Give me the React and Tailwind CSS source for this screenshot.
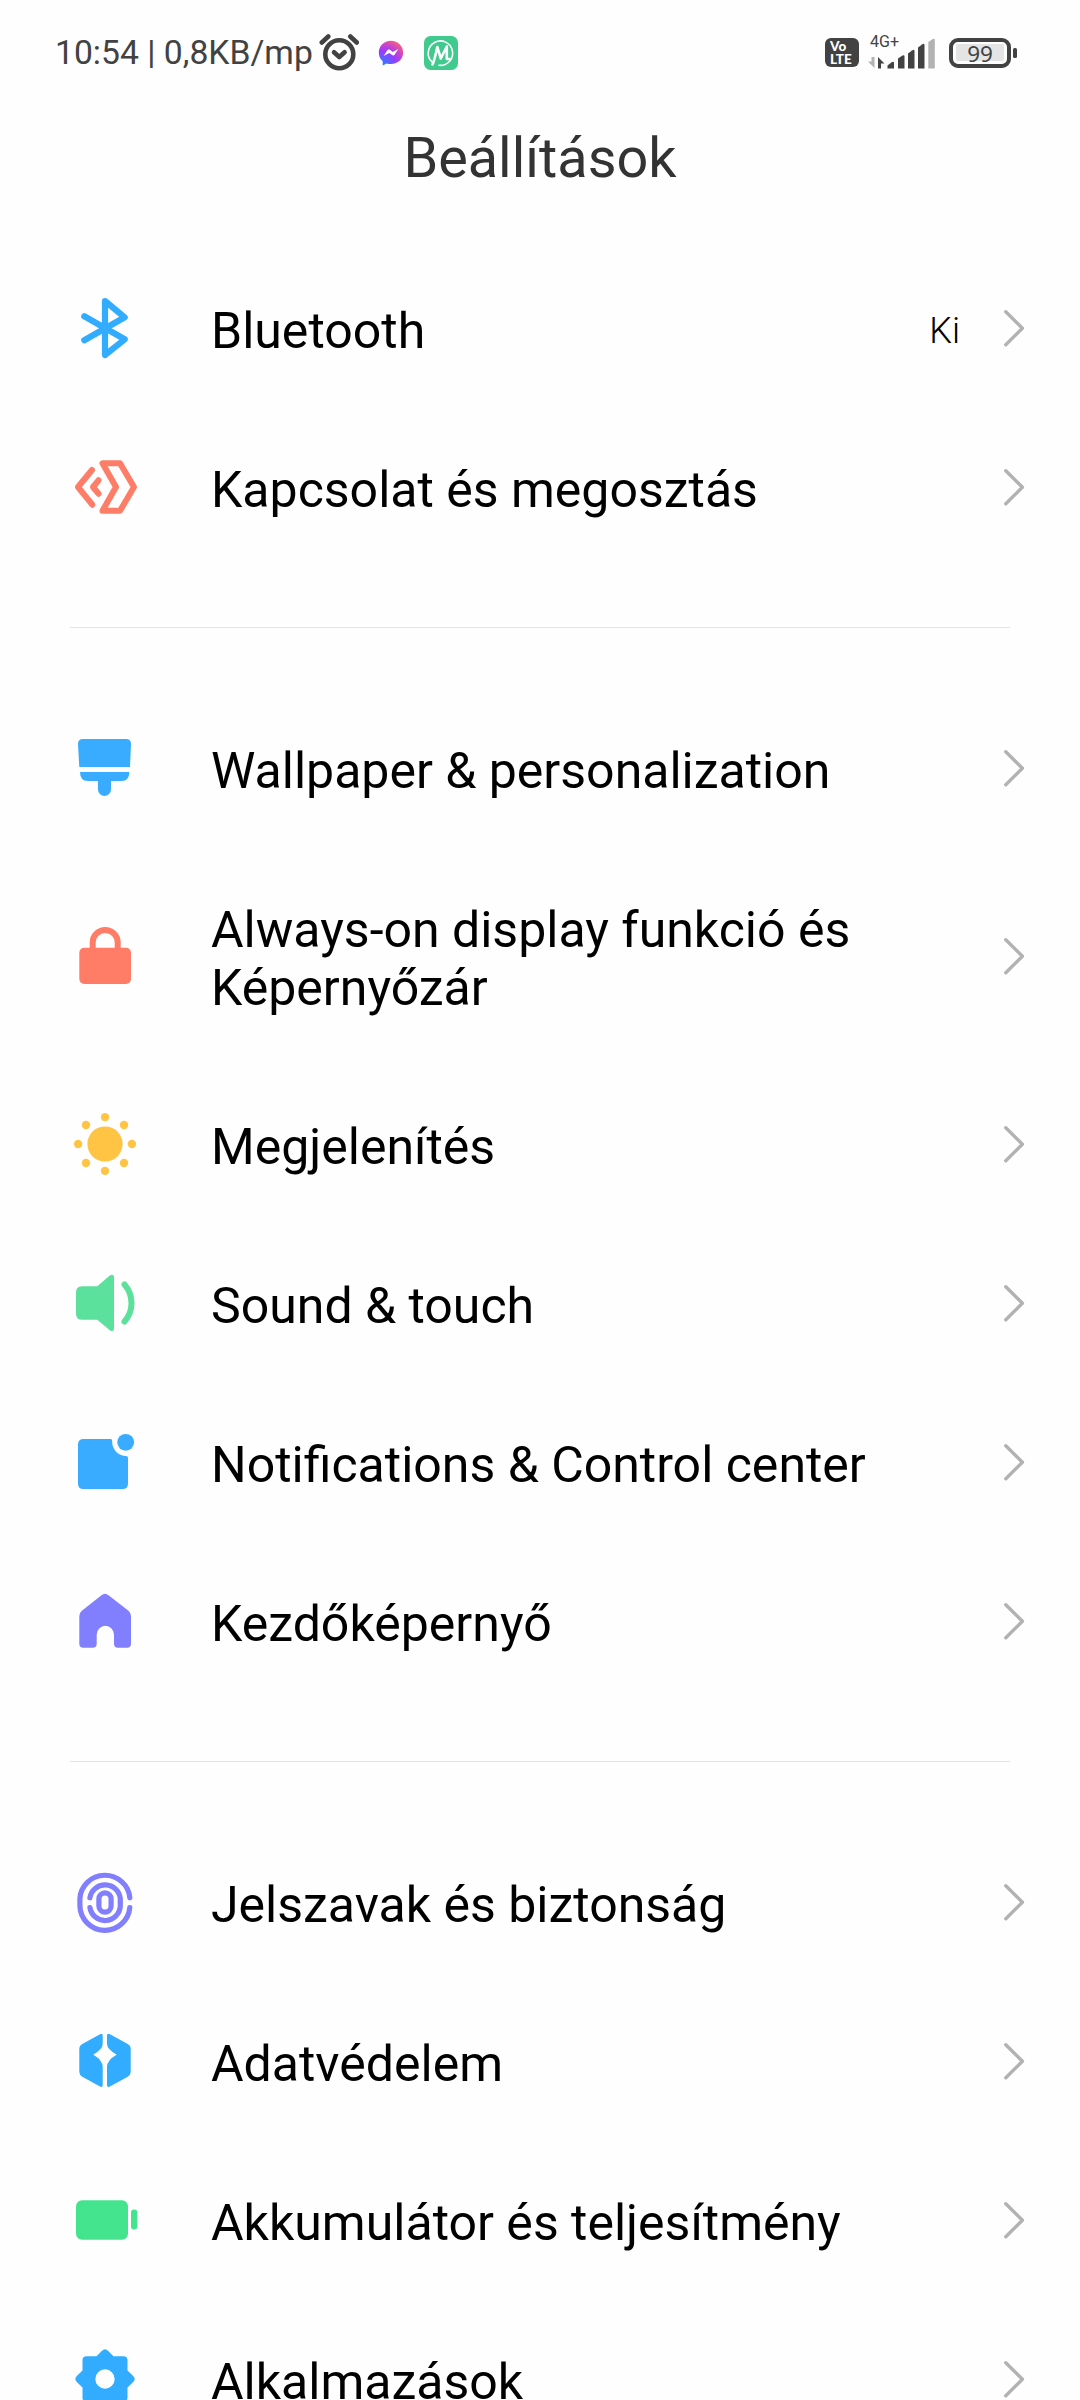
const groups = [
  [
    { label: "Bluetooth", icon: BluetoothIcon, value: "Ki" },
    { label: "Kapcsolat és megosztás", icon: ShareIcon },
  ],
  [
    { label: "Wallpaper & personalization", icon: BrushIcon },
    { label: "Always-on display funkció és Képernyőzár", icon: LockIcon },
    { label: "Megjelenítés", icon: SunIcon },
    { label: "Sound & touch", icon: SoundIcon },
    { label: "Notifications & Control center", icon: NotificationIcon },
    { label: "Kezdőképernyő", icon: HomeIcon },
  ],
  [
    { label: "Jelszavak és biztonság", icon: FingerprintIcon },
    { label: "Adatvédelem", icon: PrivacyIcon },
    { label: "Akkumulátor és teljesítmény", icon: BatteryIcon },
    { label: "Alkalmazások", icon: GearIcon },
  ],
];

export default function App() {
  return (
    <div className="h-[2400px] w-[1080px] overflow-hidden bg-[#fefefe] font-['Roboto',sans-serif] text-black">
      <StatusBar />

      <h1 className="flex h-[144px] justify-center pt-[21px] text-[55.8px] leading-[64px] text-[#333333]">
        Beállítások
      </h1>

      {groups.map((rows, i) => (
        <section key={i}>
          {i > 0 && <div className="mt-[60px] mr-[70px] mb-[61px] ml-[70px] h-px bg-[#e4e4e4]" />}
          {rows.map((row) => (
            <SettingRow key={row.label} {...row} />
          ))}
        </section>
      ))}
    </div>
  );
}

function SettingRow({ label, icon: Icon, value }) {
  return (
    <div className="flex items-center py-[50.5px] pr-[55px] pl-[73px]">
      <div className="-my-4 shrink-0">
        <Icon />
      </div>
      <div className="ml-[73px] flex-1 pt-[2px] -mb-[2px]">
        <div className="max-w-[680px] text-[50px] leading-[58px]">{label}</div>
      </div>
      {value && (
        <div className="mr-[44px] pt-[5px] text-[36px] leading-[42px] font-light">{value}</div>
      )}
      <svg className="h-[37px] w-[21px] shrink-0" viewBox="0 0 21 37" fill="none">
        <path d="M1.8 1.8 18.4 18.3 1.8 34.8" stroke="#b2b2b2" strokeWidth="3.4" strokeLinecap="round" strokeLinejoin="round" />
      </svg>
    </div>
  );
}

/* Status bar */
function StatusBar() {
  return (
    <div className="flex h-[105px] items-center pr-[63px] pl-[55px] text-[#424242]">
      <span className="w-[264px] text-[33.7px] leading-[40px] whitespace-nowrap">10:54 | 0,8KB/mp</span>

      {/* Alarm */}
      <svg className="h-[40px] w-[40px]" viewBox="0 0 40 40" fill="none" stroke="#424242" strokeWidth="4.6" strokeLinecap="round" strokeLinejoin="round">
        <circle cx="20.3" cy="21.2" r="14" />
        <path d="M15 19.3 20.3 24 25.6 19.3" />
        <path d="M2.8 9.5 9.3 3.5M37.800 9.500 31.300 3.500" />
      </svg>

      {/* Messenger */}
      <svg className="ml-[19px] h-[26px] w-[26px]" viewBox="0 0 26 26">
        <defs>
          <radialGradient id="messenger" cx="0.15" cy="1" r="1.15">
            <stop offset="0" stopColor="#1d86ff" />
            <stop offset="0.5" stopColor="#9a3cff" />
            <stop offset="0.75" stopColor="#c945c8" />
            <stop offset="1" stopColor="#ff6573" />
          </radialGradient>
        </defs>
        <path d="M13 .8C6 .8.8 5.9.8 12.6c0 3.6 1.4 6.5 3.9 8.700V25.500l4-2c1.400.4 2.800.6 4.300.6 7 0 12.200-5.100 12.200-11.500S20 .8 13 .8Z" fill="url(#messenger)" />
        <path d="m5.700 16 3.600-5.700c.6-.9 1.800-1.100 2.600-.5l2.800 2.100 5.600-3-3.600 5.700c-.6.9-1.800 1.100-2.600.5L11.300 13Z" fill="#fff" />
      </svg>

      {/* Green M app */}
      <svg className="ml-[20px] h-[34px] w-[34px]" viewBox="0 0 34 34" fill="none">
        <rect width="34" height="34" rx="6.500" fill="#40ca8d" />
        <path d="M8 26A12.200 12.200 0 1 1 15 29.300" stroke="#fff" strokeWidth="1.600" strokeLinecap="round" />
        <path d="M8.500 28.500c1.800-3.500 3.300-10.500 4.800-17.500L16.800 22.500 22.800 10.500V23h2.700" stroke="#fff" strokeWidth="2.600" strokeLinecap="round" strokeLinejoin="round" />
      </svg>

      <div className="ml-auto flex items-center">
        {/* VoLTE */}
        <div className="flex h-[29px] w-[34px] flex-col items-start rounded-[6px] bg-[#424242] pt-[2px] pl-[5px] font-['Lato',sans-serif] text-[13.5px] leading-[12.5px] font-black text-white">
          <span>Vo</span>
          <span>LTE</span>
        </div>

        {/* Mobile signal */}
        <svg className="ml-[9px] h-[52px] w-[67px]" viewBox="0 -8 67 52">
          <text x="2" y="12.300" fontSize="16" fill="#424242" className="font-['Roboto',sans-serif]" textLength="29" lengthAdjust="spacingAndGlyphs">
            4G+
          </text>
          <path d="M3.500 22H6.500V33L0 26.500H3.500Z" fill="#b2b2b2" />
          <path d="M10 22l6.500 6.500H13V33.500h-3Z" fill="#424242" />
          <g fill="#424242">
            <path d="M19.500 33.500v-3l4.500-3.500q2-1 2 1v5.500Z" />
            <path d="M30 33.500V23.500l4.500-3q2-1 2 1v12Z" />
            <path d="M40 33.500V18.500l4.500-3.300q2-1 2 1v17.300Z" />
            <path d="M50 33.500V12.500l4.500-3.300q2-1 2 1v23.300Z" />
          </g>
          <path d="M60.300 33.500V7l4.500-3q2-1 2 1v28.500Z" fill="#b2b2b2" />
        </svg>

        {/* Battery */}
        <div className="ml-[14px] flex h-[30px] w-[62px] items-center justify-center rounded-[9px] border-4 border-[#424242] p-[3px]">
          <div className="flex h-[17px] w-[48px] items-center justify-center rounded-[2px] bg-[#e4e4e4] text-[22.5px] leading-[17px]">
            <span className="pt-[1px] font-['Noto_Sans',sans-serif]">99</span>
          </div>
        </div>
        <div className="ml-[2px] h-[10px] w-[4px] rounded-[1.5px] bg-[#424242]" />
      </div>
    </div>
  );
}

/* Setting icons, all on the same 65px grid */
function IconBox({ children, ...props }) {
  return (
    <svg className="block h-[65px] w-[65px]" viewBox="0 0 65 65" {...props}>
      {children}
    </svg>
  );
}

function BluetoothIcon() {
  return (
    <IconBox fill="none" stroke="#32acff" strokeWidth="6.200" strokeLinecap="round" strokeLinejoin="round">
      <path d="M11.300 20.300 51.700 43.300 32 59V5l19.700 16.300L11.300 44.300" />
    </IconBox>
  );
}

function ShareIcon() {
  return (
    <IconBox fill="none" stroke="#fe7d67" strokeWidth="6" strokeLinecap="round" strokeLinejoin="round">
      <path d="M29.500 8.300H47L61 32 47 55.700H29.500L43 32Z" />
      <path d="M19 15 5 32l14.300 17.700" />
      <path d="M25.500 25.300 20 32l5.500 6.700" />
    </IconBox>
  );
}

function BrushIcon() {
  return (
    <IconBox fill="#39acff">
      <path d="M10 3h43q5 0 5 5l-1 23H6.300L5 8q0-5 5-5Z" />
      <path d="M7 36h49.300q0 9-8 9H38v8.500a6.500 6.500 0 0 1-13 0V45H15q-8 0-8-9Z" />
    </IconBox>
  );
}

function LockIcon() {
  return (
    <IconBox fill="#ff7d67">
      <rect x="6.300" y="23.700" width="51.700" height="36.300" rx="5" />
      <path d="M19.700 26V18.500a12.500 12.500 0 0 1 25 0V26" fill="none" stroke="#ff7d67" strokeWidth="6" />
    </IconBox>
  );
}

function SunIcon() {
  return (
    <IconBox fill="#ffc444">
      <circle cx="32" cy="32" r="17.600" />
      {[0, 45, 90, 135, 180, 225, 270, 315].map((deg) => (
        <circle key={deg} cx="32" cy="5.100" r="4.200" transform={`rotate(${deg} 32 32)`} />
      ))}
    </IconBox>
  );
}

function SoundIcon() {
  return (
    <IconBox fill="#5be19c">
      <path d="M9 15.300H24.300L36.500 4.700Q38 3.500 39.500 3.800 41 4.200 41 6V57.700Q41 59.500 39.500 59.900 38 60.200 36.500 59L24.300 48.700H9Q3 48.700 3 42.700V21.300Q3 15.300 9 15.300Z" />
      <path d="M51.500 13.500a28 28 0 0 1 0 37" fill="none" stroke="#5be19c" strokeWidth="6" strokeLinecap="round" />
    </IconBox>
  );
}

function NotificationIcon() {
  return (
    <IconBox fill="#39acff">
      <path d="M10.500 9H37.500Q39.200 9 39.200 11A14 14 0 0 0 53 26Q55 26 55 28V53.500Q55 59 49.500 59H10.500Q5 59 5 53.500V14.500Q5 9 10.500 9Z" />
      <circle cx="52.700" cy="12.300" r="8.400" />
    </IconBox>
  );
}

function HomeIcon() {
  return (
    <IconBox fill="#827fff">
      <path d="M28.500 6.300Q32 3.200 35.500 6.300L55.500 21.700Q58 24 58 27V54.700Q58 58.700 54 58.700H45Q41 58.700 41 54.700V45.500a8.650 8.650 0 0 0-17.300 0V54.700Q23.700 58.700 19.700 58.700H10.300Q6.300 58.700 6.300 54.700V27Q6.300 24 8.800 21.700Z" />
    </IconBox>
  );
}

function FingerprintIcon() {
  return (
    <IconBox fill="none" stroke="#827fff" strokeWidth="5.200" strokeLinecap="round">
      <path d="M56.800 27.800A25 24.500 0 0 0 6.900 28.800V35.800A25 25 0 0 0 56.800 37.500" />
      <path d="M16.900 27.800A15.300 15 0 0 1 47.300 28.800V36.200A15.300 15.300 0 0 1 16.900 37.500" />
      <rect x="25.900" y="22.900" width="12.200" height="19.200" rx="6.100" />
    </IconBox>
  );
}

function PrivacyIcon() {
  return (
    <IconBox fill="#32acff">
      <path d="M27 5.200Q29.700 3.800 29.700 6.700V15Q29.700 20 20.300 25.700 29.700 31 29.700 38V56Q29.700 59 27 57.600L9.300 47.800Q6.300 46 6.300 43V20Q6.300 16.700 9.300 15Z" />
      <path d="M37 5.200Q34 3.800 34 6.700V15Q34 20 43.700 25.700 34 31 34 38V56Q34 59 37 57.600L54.700 47.800Q57.700 46 57.700 43V20Q57.700 16.700 54.700 15Z" />
    </IconBox>
  );
}

function BatteryIcon() {
  return (
    <IconBox fill="#44e48e">
      <rect x="3" y="12.200" width="52" height="39.500" rx="6" />
      <rect x="58" y="21.500" width="6.300" height="20" rx="3" />
    </IconBox>
  );
}

function GearIcon() {
  return (
    <IconBox fill="#32acff" fillRule="evenodd">
      <path d="M23.500 9.300 29 3.800q3-3 6 0l5.500 5.500H50.500q4 0 4 4V23.500L60.200 29q3 3 0 6L54.500 40.500V50.500q0 4-4 4H40.500L35 60.200q-3 3-6 0L23.500 54.500H13.500q-4 0-4-4V40.500L3.800 35q-3-3 0-6L9.500 23.500V13.300q0-4 4-4ZM32 22.300a9.700 9.700 0 1 0 0 19.400 9.700 9.700 0 1 0 0-19.400Z" />
    </IconBox>
  );
}
